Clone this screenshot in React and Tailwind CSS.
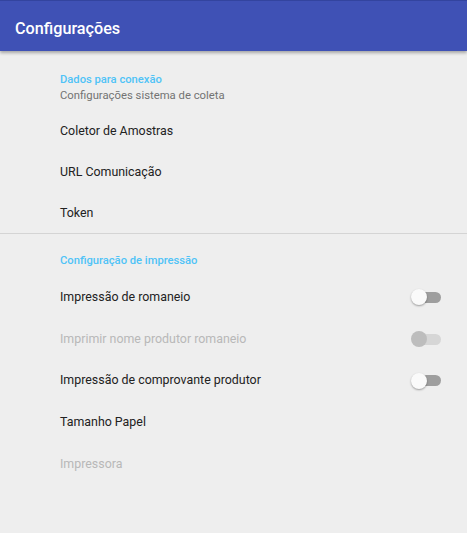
import React from "react";

function Switch({ disabled }) {
  return (
    <div className="relative w-[30px] h-[16px] flex items-center">
      <div
        className={
          "absolute left-[2px] right-0 h-[11px] rounded-full " +
          (disabled ? "bg-[#d6d6d6]" : "bg-[#9e9e9e]")
        }
      />
      <div
        className={
          "absolute left-0 w-[16px] h-[16px] rounded-full " +
          (disabled
            ? "bg-[#bdbdbd]"
            : "bg-[#fafafa] shadow-[0_1px_2px_rgba(0,0,0,0.35)]")
        }
      />
    </div>
  );
}

function Row({ label, h, disabled, toggle }) {
  return (
    <div
      className={"flex items-center justify-between pl-[60px] pr-[26px] pt-[2px] " + h}
    >
      <span
        className={
          "text-[12.4px] leading-none " +
          (disabled ? "text-[#b8b8b8]" : "text-[#222222]")
        }
      >
        {label}
      </span>
      {toggle && <Switch disabled={disabled} />}
    </div>
  );
}

export default function App() {
  return (
    <div
      className="w-[467px] h-[533px] bg-[#eeeeee] overflow-hidden"
      style={{ fontFamily: "Roboto, 'Noto Sans', sans-serif" }}
    >
      <div className="relative z-10 h-[51px] bg-[#3f51b5] border-t border-[#33449f] shadow-[0_2px_3px_rgba(0,0,0,0.3)] flex items-center pl-[15px] pt-[6px]">
        <span className="text-white text-[16.2px] font-medium leading-none">
          Configurações
        </span>
      </div>

      <div className="pt-[22px]">
        <div className="pl-[60px] flex flex-col gap-[2px]">
          <span className="text-[11.2px] leading-[14px] text-[#4fc3f7] font-medium">
            Dados para conexão
          </span>
          <span className="text-[11.3px] leading-[14px] text-[#737373]">
            Configurações sistema de coleta
          </span>
        </div>
        <div className="mt-[6px]">
          <Row label="Coletor de Amostras" h="h-[42px]" />
          <Row label="URL Comunicação" h="h-[41px]" />
          <Row label="Token" h="h-[41px]" />
        </div>
        <div className="h-px bg-[#d4d4d4]" />
        <div className="pt-[20px] pl-[60px]">
          <span className="block text-[11.2px] leading-[14px] text-[#4fc3f7] font-medium">
            Configuração de impressão
          </span>
        </div>
        <div className="mt-[7px]">
          <Row label="Impressão de romaneio" h="h-[42px]" toggle />
          <Row
            label="Imprimir nome produtor romaneio"
            h="h-[42px]"
            toggle
            disabled
          />
          <Row label="Impressão de comprovante produtor" h="h-[41px]" toggle />
          <Row label="Tamanho Papel" h="h-[42px]" />
          <Row label="Impressora" h="h-[42px]" disabled />
        </div>
      </div>
    </div>
  );
}
